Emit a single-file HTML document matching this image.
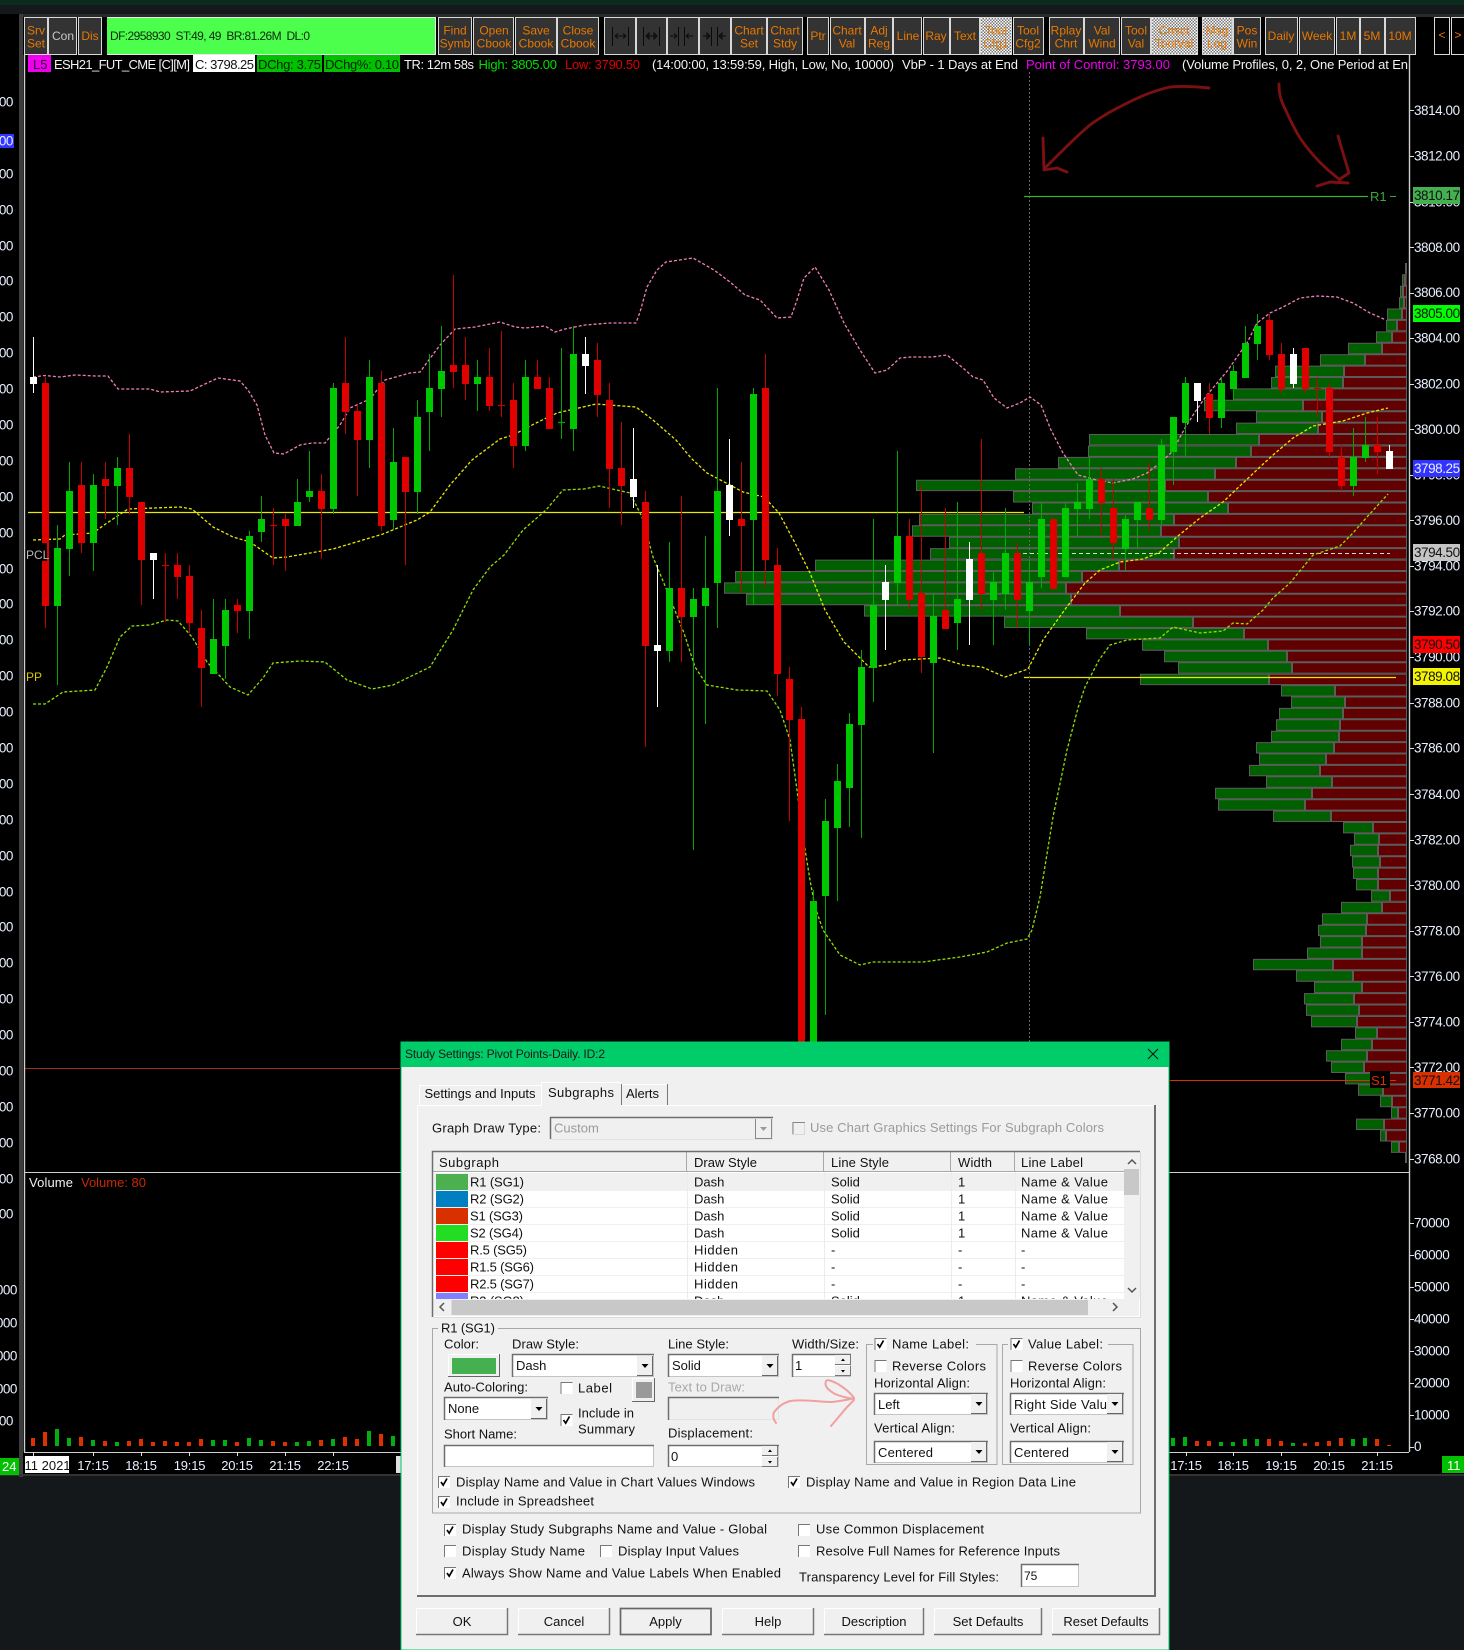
<!DOCTYPE html>
<html><head><meta charset="utf-8"><title>Study Settings</title>
<style>
html,body{margin:0;padding:0;background:#15181a}
svg{display:block}
text{font-family:"Liberation Sans",sans-serif;white-space:pre}
.t{font-size:13px;fill:#111}
.g{font-size:13px;fill:#9a9a9a}
.b{font-size:12px;fill:#e87800;text-anchor:middle}
.w{font-size:13px;fill:#f2f2f2}
.x{font-size:13.5px;letter-spacing:-.45px;fill:#e8f0ff}
.k{font-size:13.5px;letter-spacing:-.45px;fill:#111}
.l{font-size:13.5px;letter-spacing:-.45px;fill:#e8f0ff;text-anchor:end}
.m{font-size:13px;fill:#e8f0ff;text-anchor:middle;letter-spacing:-.2px}
.c{font-size:13px;fill:#111;text-anchor:middle}
.e{fill:#fff;stroke:#c4c4c4}
.d{fill:none;stroke:#6e6e6e;stroke-width:1.5}
</style></head>
<body>
<svg xmlns="http://www.w3.org/2000/svg" width="1464" height="1650" viewBox="0 0 1464 1650">
<defs>
<pattern id="ck" width="3" height="3" patternUnits="userSpaceOnUse"><rect width="3" height="3" fill="#777"/><rect width="1.5" height="1.5" fill="#fff"/><rect x="1.5" y="1.5" width="1.5" height="1.5" fill="#fff"/></pattern>
<g id="c0"><rect width="12" height="12" fill="#fff"/><path d="M.5 12V.5H12" stroke="#777" fill="none"/></g>
<g id="c1"><rect width="12" height="12" fill="#fff"/><path d="M.5 12V.5H12" stroke="#777" fill="none"/><path d="M3 6l2.200 3.200L9 2.500" stroke="#000" stroke-width="1.700" fill="none"/></g>
<g id="a"><rect width="16" height="20" fill="#f0f0f0"/><path d="M15.500 0V20M0 19.500H16" stroke="#666"/><path d="M4.500 8h7L8 12z" fill="#000"/></g>
<g id="s"><rect width="16" height="10" fill="#f0f0f0"/><path d="M15.500 0V10M0 9.500H16" stroke="#777"/><path d="M6 6h4L8 3.500z" fill="#000"/><rect y="11" width="16" height="10" fill="#f0f0f0"/><path d="M15.500 11V21M0 20.500H16" stroke="#777"/><path d="M6 15h4l-2 2.500z" fill="#000"/></g>
</defs>

<rect width="1464" height="1650" fill="#15181a"/>
<rect width="1464" height="5" fill="#0b2c1d"/>
<rect y="5" width="1464" height="9" fill="#14191c"/>
<rect y="14" width="1464" height="3" fill="#2a2a2a"/>
<rect y="14" width="1464" height="1460" fill="#000"/>
<rect y="14" x="22" width="1442" height="3" fill="#2a2a2a"/>
<rect x="19" y="14" width="4" height="1463" fill="#3c3c3c"/>
<rect x="0" y="1474" width="1464" height="2" fill="#333"/>

<!-- Toolbar -->
<g fill="#333" stroke="#d8d8d8" stroke-width="1">
<rect x="24.500" y="17.500" width="23" height="37"/><rect x="48.500" y="17.500" width="28" height="37"/><rect x="78.500" y="17.500" width="23" height="37"/>
<rect x="438.500" y="17.500" width="33" height="37"/><rect x="473.500" y="17.500" width="40" height="37"/><rect x="515.500" y="17.500" width="41" height="37"/><rect x="557.500" y="17.500" width="41" height="37"/>
<rect x="604.500" y="17.500" width="31" height="37"/><rect x="636.500" y="17.500" width="30" height="37"/><rect x="667.500" y="17.500" width="31" height="37"/><rect x="699.500" y="17.500" width="31" height="37"/>
<rect x="731.500" y="17.500" width="35" height="37"/><rect x="767.500" y="17.500" width="35" height="37"/>
<rect x="807.500" y="17.500" width="21" height="37"/><rect x="830.500" y="17.500" width="34" height="37"/><rect x="865.500" y="17.500" width="27" height="37"/><rect x="893.500" y="17.500" width="28" height="37"/><rect x="923.500" y="17.500" width="26" height="37"/><rect x="950.500" y="17.500" width="29" height="37"/>
<rect x="980.500" y="17.500" width="31" height="37" fill="url(#ck)"/><rect x="1013.500" y="17.500" width="30" height="37"/>
<rect x="1049.500" y="17.500" width="34" height="37"/><rect x="1084.500" y="17.500" width="35" height="37"/><rect x="1121.500" y="17.500" width="29" height="37"/>
<rect x="1151.500" y="17.500" width="46" height="37" fill="url(#ck)"/><rect x="1202.500" y="17.500" width="30" height="37" fill="url(#ck)"/><rect x="1233.500" y="17.500" width="27" height="37"/>
<rect x="1265.500" y="17.500" width="32" height="37"/><rect x="1299.500" y="17.500" width="35" height="37"/><rect x="1336.500" y="17.500" width="23" height="37"/><rect x="1360.500" y="17.500" width="24" height="37"/><rect x="1385.500" y="17.500" width="30" height="37"/>
<rect x="1434.500" y="17.500" width="15" height="37" fill="#000"/><rect x="1451.500" y="17.500" width="14" height="37" fill="#000"/>
</g>
<rect x="107" y="17" width="329" height="38" fill="#4dff4d"/>
<path d="M107 54.500H436M435.500 17V55M107 17.500H436" stroke="#e8e8e8" fill="none"/>
<text x="110" y="40" font-size="12" fill="#0a2a0a" textLength="200">DF:2958930  ST:49, 49  BR:81.26M  DL:0</text>

<text class="b" x="36" y="34.500">Srv</text><text class="b" x="36" y="47.500">Set</text>
<text class="b" x="63" y="40" style="fill:#c8c8c8">Con</text>
<text class="b" x="90" y="40">Dis</text>
<text class="b" x="455" y="34.500">Find</text><text class="b" x="455" y="47.500">Symb</text>
<text class="b" x="494" y="34.500">Open</text><text class="b" x="494" y="47.500">Cbook</text>
<text class="b" x="536" y="34.500">Save</text><text class="b" x="536" y="47.500">Cbook</text>
<text class="b" x="578" y="34.500">Close</text><text class="b" x="578" y="47.500">Cbook</text>
<g stroke="#0a0a0a" fill="none">
<path d="M612.500 27V46M628.500 27V46M615 36h11M615 36l3-2.500M615 36l3 2.500M626 36l-3-2.500M626 36l-3 2.500"/>
<path d="M643.500 27V46M659.500 27V46M646 36h11M646 36l3-3v6zM657 36l-3-3v6z"/>
<path d="M678.500 27V46M684.500 27V46M670 36h7M677 36l-3-2.500M677 36l-3 2.500M693 36h-7M686 36l3-2.500M686 36l3 2.500"/>
<path d="M711.500 27V46M717.500 27V46M703 36h7M710 36l-3-3v6zM726 36h-7M719 36l3-3v6z"/>
</g>
<text class="b" x="749" y="34.500">Chart</text><text class="b" x="749" y="47.500">Set</text>
<text class="b" x="785" y="34.500">Chart</text><text class="b" x="785" y="47.500">Stdy</text>
<text class="b" x="818" y="40">Ptr</text>
<text class="b" x="847" y="34.500">Chart</text><text class="b" x="847" y="47.500">Val</text>
<text class="b" x="879" y="34.500">Adj</text><text class="b" x="879" y="47.500">Reg</text>
<text class="b" x="908" y="40">Line</text>
<text class="b" x="936" y="40">Ray</text>
<text class="b" x="965" y="40">Text</text>
<text class="b" x="996" y="34.500">Tool</text><text class="b" x="996" y="47.500">Cfg1</text>
<text class="b" x="1028" y="34.500">Tool</text><text class="b" x="1028" y="47.500">Cfg2</text>
<text class="b" x="1066" y="34.500">Rplay</text><text class="b" x="1066" y="47.500">Chrt</text>
<text class="b" x="1102" y="34.500">Val</text><text class="b" x="1102" y="47.500">Wind</text>
<text class="b" x="1136" y="34.500">Tool</text><text class="b" x="1136" y="47.500">Val</text>
<text class="b" x="1174" y="34.500">Cnsct</text><text class="b" x="1174" y="47.500">ToolVal</text>
<text class="b" x="1217" y="34.500">Msg</text><text class="b" x="1217" y="47.500">Log</text>
<text class="b" x="1247" y="34.500">Pos</text><text class="b" x="1247" y="47.500">Win</text>
<text class="b" x="1281" y="40">Daily</text>
<text class="b" x="1317" y="40">Week</text>
<text class="b" x="1348" y="40">1M</text>
<text class="b" x="1372" y="40">5M</text>
<text class="b" x="1400" y="40">10M</text>
<text class="b" x="1442" y="39">&lt;</text>
<text class="b" x="1458" y="39">&gt;</text>

<!-- Info line -->
<rect x="28" y="55" width="23" height="17" fill="#ee00ee"/>
<text class="t" x="33" y="69" style="fill:#300030">L5</text>
<text class="w" x="54" y="69" textLength="136">ESH21_FUT_CME [C][M]</text>
<rect x="193" y="55" width="62" height="17" fill="#fff"/>
<text class="t" x="195" y="69" textLength="59">C: 3798.25</text>
<rect x="257" y="55" width="65" height="17" fill="#00c000"/>
<text class="t" x="258" y="69" textLength="63" style="fill:#002000">DChg: 3.75</text>
<rect x="324" y="55" width="76" height="17" fill="#00c000"/>
<text class="t" x="325" y="69" textLength="74" style="fill:#002000">DChg%: 0.10</text>
<text class="w" x="404" y="69" textLength="70">TR: 12m 58s</text>
<text class="w" x="478.500" y="69" textLength="78.500" style="fill:#00e000">High: 3805.00</text>
<text class="w" x="565" y="69" textLength="75" style="fill:#e00000">Low: 3790.50</text>
<text class="w" x="652" y="69" textLength="242">(14:00:00, 13:59:59, High, Low, No, 10000)</text>
<text class="w" x="902" y="69" textLength="116">VbP - 1 Days at End</text>
<text class="w" x="1026" y="69" textLength="144" style="fill:#f000f0">Point of Control: 3793.00</text>
<text class="w" x="1182" y="69" textLength="226">(Volume Profiles, 0, 2, One Period at En</text>

<!-- Volume profile -->
<path fill="none" stroke="#5c5c5c" stroke-width="11.400" d="M1402 280H1407M1400 291.400H1407M1399 302.800H1407M1387 314.200H1407M1386 325.600H1407M1376 337.100H1407M1348 348.500H1407M1320 359.900H1407M1275 371.300H1407M1271 382.700H1407M1233 394.100H1407M1204 405.500H1407M1256 416.900H1407M1236 428.300H1407M1089 439.700H1407M1088 451.200H1407M1058 462.600H1407M1015 474H1407M916 485.400H1407M1013 496.800H1407M1032 508.200H1407M919 519.600H1407M912 531H1407M949 542.400H1407M930 553.800H1407M815 565.300H1407M735 576.700H1407M724 588.100H1407M746 599.500H1407M864 610.900H1407M1004 622.300H1407M1086 633.700H1407M1142 645.100H1407M1164 656.500H1407M1178 667.900H1407M1140 679.400H1407M1281 690.800H1407M1291 702.200H1407M1279 713.600H1407M1276 725H1407M1271 736.400H1407M1256 747.800H1407M1259 759.200H1407M1249 770.600H1407M1266 782H1407M1215 793.500H1407M1218 804.900H1407M1273 816.300H1407M1343 827.700H1407M1354 839.100H1407M1350 850.500H1407M1352 861.900H1407M1353 873.300H1407M1356 884.700H1407M1371 896.100H1407M1341 907.600H1407M1322 919H1407M1318 930.400H1407M1320 941.800H1407M1307 953.200H1407M1253 964.600H1407M1296 976H1407M1314 987.400H1407M1304 998.800H1407M1306 1010.200H1407M1311 1021.700H1407M1355 1033.100H1407M1341 1044.500H1407M1326 1055.900H1407M1331 1067.300H1407M1345 1078.700H1407M1358 1090.100H1407M1380 1101.500H1407M1391 1112.900H1407M1356 1124.300H1407M1380 1135.800H1407M1391 1147.200H1407"/>
<path fill="none" stroke="#006000" stroke-width="9.400" d="M1403 280H1404M1401 291.400H1402M1400 302.800H1403M1388 314.200H1401M1387 325.600H1396M1377 337.100H1391M1349 348.500H1381M1321 359.900H1364M1276 371.300H1343M1272 382.700H1342M1234 394.100H1325M1205 405.500H1302M1257 416.900H1321M1237 428.300H1317M1090 439.700H1258M1089 451.200H1250M1059 462.600H1235M1016 474H1214M917 485.400H1164M1014 496.800H1207M1033 508.200H1227M920 519.600H1173M913 531H1160M950 542.400H1178M931 553.800H1173M816 565.300H1118M736 576.700H1081M725 588.100H1065M747 599.500H1070M865 610.900H1119M1005 622.300H1192M1087 633.700H1243M1143 645.100H1267M1165 656.500H1286M1179 667.900H1291M1141 679.400H1268M1282 690.800H1334M1292 702.200H1344M1280 713.600H1342M1277 725H1339M1272 736.400H1338M1257 747.800H1333M1260 759.200H1325M1250 770.600H1319M1267 782H1331M1216 793.500H1311M1219 804.900H1304M1274 816.300H1330M1344 827.700H1372M1355 839.100H1378M1351 850.500H1377M1353 861.900H1379M1354 873.300H1377M1357 884.700H1377M1372 896.100H1389M1342 907.600H1381M1323 919H1366M1319 930.400H1365M1321 941.800H1361M1308 953.200H1361M1254 964.600H1332M1297 976H1352M1315 987.400H1361M1305 998.800H1353M1307 1010.200H1358M1312 1021.700H1356M1356 1033.100H1376M1342 1044.500H1371M1327 1055.900H1366M1332 1067.300H1363M1346 1078.700H1374M1359 1090.100H1382M1381 1101.500H1391M1392 1112.900H1397M1357 1124.300H1383M1381 1135.800H1385M1392 1147.200H1398"/>
<path fill="none" stroke="#600000" stroke-width="9.400" d="M1406 280H1406.500M1404 291.400H1406M1405 302.800H1406M1403 314.200H1406M1398 325.600H1406M1393 337.100H1406M1383 348.500H1406M1366 359.900H1406M1345 371.300H1406M1344 382.700H1406M1327 394.100H1406M1304 405.500H1406M1323 416.900H1406M1319 428.300H1406M1260 439.700H1406M1252 451.200H1406M1237 462.600H1406M1216 474H1406M1166 485.400H1406M1209 496.800H1406M1229 508.200H1406M1175 519.600H1406M1162 531H1406M1180 542.400H1406M1175 553.800H1406M1120 565.300H1406M1083 576.700H1406M1067 588.100H1406M1072 599.500H1406M1121 610.900H1406M1194 622.300H1406M1245 633.700H1406M1269 645.100H1406M1288 656.500H1406M1293 667.900H1406M1270 679.400H1406M1336 690.800H1406M1346 702.200H1406M1344 713.600H1406M1341 725H1406M1340 736.400H1406M1335 747.800H1406M1327 759.200H1406M1321 770.600H1406M1333 782H1406M1313 793.500H1406M1306 804.900H1406M1332 816.300H1406M1374 827.700H1406M1380 839.100H1406M1379 850.500H1406M1381 861.900H1406M1379 873.300H1406M1379 884.700H1406M1391 896.100H1406M1383 907.600H1406M1368 919H1406M1367 930.400H1406M1363 941.800H1406M1363 953.200H1406M1334 964.600H1406M1354 976H1406M1363 987.400H1406M1355 998.800H1406M1360 1010.200H1406M1358 1021.700H1406M1378 1033.100H1406M1373 1044.500H1406M1368 1055.900H1406M1365 1067.300H1406M1376 1078.700H1406M1384 1090.100H1406M1393 1101.500H1406M1399 1112.900H1406M1385 1124.300H1406M1387 1135.800H1406M1400 1147.200H1406"/>
<rect x="1405" y="263" width="2" height="11" fill="#5c5c5c"/>
<rect x="1405" y="1152" width="2" height="11" fill="#5c5c5c"/>

<!-- Horizontal / vertical reference lines -->
<path d="M28 512.500H1024" stroke="#e8e800" stroke-width="1.300"/>
<path d="M1024 677.500H1396" stroke="#e8e800" stroke-width="1.300"/>
<path d="M1023 553.500H1390" stroke="#d8d8d8" stroke-dasharray="4 3"/>
<path d="M1029.500 72V1042" stroke="#6a6a6a" stroke-dasharray="2 2"/>
<path d="M24 1068.500H400" stroke="#a03018"/>
<path d="M1024 196.500H1368" stroke="#35b035" stroke-width="1.200"/>
<path d="M1170 1080.500H1396" stroke="#d83000"/>

<!-- Bands -->
<g fill="none" stroke-dasharray="3 2" stroke-width="1.300">
<path stroke="#f080b8" d="M33 377L45 375.500 60 377 75 375 95 376 108 376 118 389 150 389 160 392 190 391 205 384 218 378 240 381 248 390 257 405 265 435 274 453 284 454 300 445 312 443 325 443 340 425 350 408 370 399 385 380 410 373 420 372 440 345 455 329 475 327 500 322 515 327 525 328 545 326 555 332 565 329 585 325 610 323 636 323 640 312 647 287 657 270 666 262 693 258 714 270 730 282 745 295 760 300 777 318 791 317 797 300 804 278 815 267 829 290 844 323 860 350 875 373 887 370 900 358 911 357 932 357 947 355 963 368 973 377 983 380 994 398 1007 408 1020 403 1030 397 1041 405 1051 430 1063 453 1078 475 1097 480 1113 483 1133 479 1147 473 1160 463 1172 452 1185 428 1195 412 1207 395 1218 382 1228 370 1237 357 1247 343 1257 323 1270 313 1283 307 1300 298 1317 296 1337 297 1353 303 1370 313 1386 320"/>
<path stroke="#e8e800" d="M33 540L60 539 65 535 93 533 107 523 128 509 180 507 192 509 213 527 233 537 250 542 273 558 287 557 333 549 383 534 417 520 430 512 450 485 472 460 500 439 513 435 538 422 557 413 596 404 636 407 653 420 676 440 691 458 707 473 730 485 743 492 764 497 779 513 795 543 810 573 825 610 844 642 869 667 887 665 902 660 940 658 963 665 982 667 1005 677 1028 669 1043 640 1066 608 1085 583 1100 570 1120 562 1143 559 1160 552 1178 536 1200 518 1223 502 1243 483 1260 467 1273 455 1293 438 1313 426 1343 421 1367 413 1388 408"/>
<path stroke="#90e000" d="M33 704L45 704 63 692 95 690 107 667 120 637 132 626 150 625 167 620 178 621 192 637 207 662 230 687 248 695 263 678 273 663 300 661 325 662 347 680 372 689 393 685 430 667 453 630 473 590 490 567 504 555 523 530 546 510 563 490 584 489 599 486 630 493 642 517 653 557 668 593 684 633 695 667 707 685 737 690 767 691 780 710 790 740 797 790 803 837 810 880 815 907 823 930 840 955 860 965 873 962 923 962 960 957 987 952 1007 943 1027 939 1032 930 1040 897 1053 817 1067 750 1078 708 1085 687 1099 660 1110 645 1127 640 1160 638 1173 627 1200 633 1223 631 1233 623 1247 624 1263 610 1273 598 1290 583 1313 555 1340 546 1353 533 1367 517 1388 494"/>
</g>

<!-- Candle wicks -->
<path fill="none" stroke="#c80000" d="M45.500 377V628M81.500 462V553M105.500 462V519M129.500 434V514M141.500 502V605M165.500 553V622M177.500 553V599M189.500 565V633M201.500 610V707M237.500 599V633M273.500 508V565M285.500 514V571M321.500 474V559M345.500 337V434M357.500 405V496M381.500 371V531M405.500 457V565M453.500 275V388M465.500 337V400M489.500 348V411M501.500 331V417M513.500 383V468M537.500 360V389M549.500 377V429M597.500 343V417M609.500 383V508M621.500 422V525M645.500 491V747M681.500 496V662M741.500 462V593M765.500 354V588M777.500 548V696M789.500 667V821M801.500 707V1042M909.500 519V610M921.500 485V673M945.500 508V629M981.500 439V610M1017.500 542V628M1053.500 519V589M1101.500 468V536M1113.500 479V559M1149.500 462V531M1209.500 383V434M1269.500 314V360M1281.500 343V394M1305.500 348V394M1317.500 377V417M1329.500 383V457M1341.500 445V491M1377.500 417V474"/>
<path fill="none" stroke="#00a800" d="M57.500 525V685M69.500 462V576M93.500 474V571M117.500 457V525M213.500 599V674M225.500 599V679M249.500 531V639M261.500 496V542M297.500 479V526M309.500 451V502M333.500 383V514M369.500 360V468M393.500 428V530M417.500 400V514M429.500 354V451M441.500 326V417M477.500 360V411M525.500 360V451M561.500 348V439M573.500 326V451M669.500 542V662M693.500 588V850M705.500 536V724M717.500 388V628M753.500 388V605M813.500 890V1042M825.500 799V1015M837.500 764V901M849.500 713V827M861.500 650V838M873.500 519V702M897.500 451V605M933.500 593V753M957.500 502V650M993.500 571V645M1005.500 508V610M1029.500 559V645M1041.500 502V588M1065.500 502V577M1077.500 483V536M1089.500 457V519M1125.500 515V571M1137.500 502V548M1161.500 439V525M1173.500 417V485M1185.500 377V457M1221.500 377V428M1233.500 365V400M1245.500 326V378M1257.500 314V360M1353.500 428V496M1365.500 417V462"/>
<path fill="none" stroke="#fff" d="M33.500 337V393M153.500 553V599M585.500 337V394M633.500 428V508M657.500 565V707M729.500 439V536M885.500 565V650M969.500 542V645M1197.500 383V422M1293.500 348V388M1389.500 445V469"/>
<!-- Candle bodies -->
<path fill="none" stroke="#e00000" stroke-width="7" d="M45.500 383V606M81.500 485V543M105.500 479V486M129.500 468V497M141.500 502V560M177.500 565V577M189.500 576V623M201.500 628V668M237.500 605V611M285.500 519V526M321.500 491V509M345.500 383V412M357.500 411V440M381.500 383V526M405.500 457V492M453.500 365V372M465.500 365V384M489.500 377V406M513.500 400V446M537.500 377V389M549.500 388V429M597.500 360V395M609.500 400V469M621.500 468V486M645.500 502V646M681.500 588V617M741.500 519V526M765.500 388V560M777.500 565V674M789.500 679V720M801.500 719V1042M909.500 536V600M921.500 593V657M945.500 610V629M981.500 553V594M1017.500 553V600M1053.500 519V589M1101.500 479V503M1113.500 508V543M1149.500 508V520M1209.500 394V418M1269.500 320V355M1281.500 354V389M1305.500 348V389M1329.500 388V452M1341.500 457V486M1377.500 445V452"/>
<path fill="none" stroke="#00c800" stroke-width="7" d="M57.500 548V606M69.500 491V549M93.500 485V543M117.500 468V486M213.500 639V674M225.500 610V646M249.500 536V611M261.500 519V532M297.500 502V526M309.500 491V497M333.500 388V509M369.500 377V440M393.500 462V520M417.500 417V492M429.500 388V412M441.500 371V389M477.500 377V384M525.500 377V446M573.500 354V429M669.500 588V651M693.500 599V617M705.500 588V606M717.500 491V583M753.500 394V520M813.500 901V1042M825.500 821V896M837.500 781V828M849.500 724V788M861.500 667V725M873.500 605V668M897.500 536V583M933.500 616V663M957.500 599V623M993.500 582V600M1005.500 553V594M1029.500 582V611M1041.500 519V577M1065.500 508V577M1077.500 502V509M1089.500 479V509M1125.500 519V549M1137.500 502V520M1161.500 445V520M1173.500 417V452M1185.500 383V423M1221.500 383V418M1233.500 371V389M1245.500 343V378M1257.500 326V344M1353.500 457V486M1365.500 445V458"/>
<path fill="none" stroke="#fff" stroke-width="7" d="M33.500 377V384M153.500 553V560M585.500 354V366M633.500 479V497M657.500 645V651M729.500 485V520M885.500 582V600M969.500 559V600M1197.500 383V401M1293.500 354V384M1389.500 451V469"/>
<!-- Dojis -->
<path fill="none" stroke="#c80000" stroke-width="1.300" d="M162 565.500h7M270 525.500h7M498 405.500h7M1314 388.500h7"/>
<path fill="none" stroke="#00a800" stroke-width="1.300" d="M558 422.500h7"/>

<!-- Labels on chart -->
<rect x="26" y="543" width="21" height="18" fill="#000"/>
<text x="26" y="559" font-size="12" fill="#b8b8b8">PCL</text>
<text x="26" y="681" font-size="12" fill="#d8c800">PP</text>
<text x="1370" y="201" font-size="13" fill="#3fa53f">R1</text>
<path d="M1390 196.500h6" stroke="#3fa53f"/>
<rect x="1370" y="1071" width="20" height="17" fill="#000"/>
<text x="1371" y="1085" font-size="13" fill="#d83000">S1</text>

<!-- Hand drawn arrows -->
<g fill="none" stroke="#7a1010" stroke-width="2.900" stroke-linecap="round" stroke-linejoin="round">
<path d="M1209 88C1190 86 1180 86 1170 87 1147 92 1127 103 1110 112 1100 118 1095 121 1090 125 1078 135 1065 148 1058 155L1044 169"/>
<path d="M1043 138L1044 170 1057 168 1067 172"/>
<path d="M1279 84C1279 92 1280 97 1282 102 1287 113 1292 125 1300 138 1308 150 1317 160 1328 170L1340 180"/>
<path d="M1338 136L1343 153 1349 173 1340 179M1348 183L1330 182 1317 186"/>
</g>

<!-- Right axis -->
<path d="M24.500 55V1452M1409.500 55V1452" stroke="#cfcfcf" stroke-width="1.400"/>
<path d="M24 1172.500H1409M24 1452.500H1409" stroke="#cfcfcf"/>
<path stroke="#e0e0e0" d="M1410 110.500h4M1410 156.500h4M1410 202.500h4M1410 247.500h4M1410 293.500h4M1410 338.500h4M1410 384.500h4M1410 429.500h4M1410 475.500h4M1410 520.500h4M1410 566.500h4M1410 611.500h4M1410 657.500h4M1410 703.500h4M1410 748.500h4M1410 794.500h4M1410 840.500h4M1410 885.500h4M1410 931.500h4M1410 976.500h4M1410 1022.500h4M1410 1067.500h4M1410 1113.500h4M1410 1159.500h4M1410 1223.500h4M1410 1255.500h4M1410 1287.500h4M1410 1319.500h4M1410 1351.500h4M1410 1383.500h4M1410 1415.500h4M1410 1447.500h4"/>
<text class="x" x="1414" y="115">3814.00</text><text class="x" x="1414" y="160.500">3812.00</text><text class="x" x="1414" y="206.500">3810.00</text><text class="x" x="1414" y="252">3808.00</text><text class="x" x="1414" y="297">3806.00</text><text class="x" x="1414" y="342.500">3804.00</text><text class="x" x="1414" y="388.500">3802.00</text><text class="x" x="1414" y="434">3800.00</text><text class="x" x="1414" y="479.500">3798.00</text><text class="x" x="1414" y="525">3796.00</text><text class="x" x="1414" y="570.500">3794.00</text><text class="x" x="1414" y="615.500">3792.00</text><text class="x" x="1414" y="661.500">3790.00</text><text class="x" x="1414" y="707.500">3788.00</text><text class="x" x="1414" y="752.500">3786.00</text><text class="x" x="1414" y="799">3784.00</text><text class="x" x="1414" y="844.500">3782.00</text><text class="x" x="1414" y="890">3780.00</text><text class="x" x="1414" y="935.500">3778.00</text><text class="x" x="1414" y="981">3776.00</text><text class="x" x="1414" y="1026.500">3774.00</text><text class="x" x="1414" y="1072">3772.00</text><text class="x" x="1414" y="1117.500">3770.00</text><text class="x" x="1414" y="1163.500">3768.00</text>
<rect x="1413" y="187" width="47" height="17" fill="#45b050"/><text class="k" x="1414" y="200">3810.17</text>
<rect x="1413" y="305" width="47" height="17" fill="#00ff00"/><text class="k" x="1414" y="318">3805.00</text>
<rect x="1413" y="460" width="47" height="17" fill="#3333ff"/><text class="x" x="1414" y="473">3798.25</text>
<rect x="1413" y="544" width="47" height="17" fill="#c4c4c4"/><text class="k" x="1414" y="557">3794.50</text>
<rect x="1413" y="636" width="47" height="17" fill="#ff0000"/><text class="k" x="1414" y="649">3790.50</text>
<rect x="1413" y="668" width="47" height="17" fill="#f4f400"/><text class="k" x="1414" y="681">3789.08</text>
<rect x="1413" y="1072" width="47" height="16" fill="#d83000"/><text class="k" x="1414" y="1085">3771.42</text>

<text class="x" x="1414" y="1227.500">70000</text><text class="x" x="1414" y="1259.500">60000</text><text class="x" x="1414" y="1291.500">50000</text><text class="x" x="1414" y="1323.500">40000</text><text class="x" x="1414" y="1355.500">30000</text><text class="x" x="1414" y="1387.500">20000</text><text class="x" x="1414" y="1419.500">10000</text><text class="x" x="1414" y="1451">0</text>

<!-- Left axis -->
<g>
<rect x="0" y="134" width="14" height="14" fill="#3333ff"/>
<text class="l" x="13" y="106.500">00</text><text class="l" x="13" y="145.500">00</text><text class="l" x="13" y="178.500">00</text><text class="l" x="13" y="214.500">00</text><text class="l" x="13" y="250.500">00</text><text class="l" x="13" y="285.500">00</text><text class="l" x="13" y="321.500">00</text><text class="l" x="13" y="357.500">00</text><text class="l" x="13" y="393.500">00</text><text class="l" x="13" y="429.500">00</text><text class="l" x="13" y="465.500">00</text><text class="l" x="13" y="501.500">00</text><text class="l" x="13" y="537.500">00</text><text class="l" x="13" y="573.500">00</text><text class="l" x="13" y="608.500">00</text><text class="l" x="13" y="644.500">00</text><text class="l" x="13" y="680.500">00</text><text class="l" x="13" y="716.500">00</text><text class="l" x="13" y="752.500">00</text><text class="l" x="13" y="788.500">00</text><text class="l" x="13" y="824.500">00</text><text class="l" x="13" y="860.500">00</text><text class="l" x="13" y="896.500">00</text><text class="l" x="13" y="931.500">00</text><text class="l" x="13" y="967.500">00</text><text class="l" x="13" y="1003.500">00</text><text class="l" x="13" y="1039.500">00</text><text class="l" x="13" y="1075.500">00</text><text class="l" x="13" y="1111.500">00</text><text class="l" x="13" y="1147.500">00</text><text class="l" x="13" y="1183.500">00</text><text class="l" x="13" y="1218.500">00</text>
<text class="l" x="17" y="1294.500">000</text><text class="l" x="17" y="1327.500">000</text><text class="l" x="17" y="1360.500">000</text><text class="l" x="17" y="1393.500">000</text><text class="l" x="13" y="1425.500">00</text>
</g>

<!-- Volume panel -->
<text class="w" x="29" y="1187" textLength="44">Volume</text>
<text class="w" x="81" y="1187" textLength="65" style="fill:#c82a00">Volume: 80</text>
<path fill="none" stroke="#00b010" stroke-width="4" d="M57 1446v-17M69 1446v-8M93 1446v-6M117 1446v-4M213 1446v-6M225 1446v-6M249 1446v-8M261 1446v-6M297 1446v-4M309 1446v-5M333 1446v-7M369 1446v-15M393 1446v-10M1173 1446v-8M1185 1446v-9M1221 1446v-4M1233 1446v-4M1245 1446v-7M1257 1446v-7M1293 1446v-3M1353 1446v-7M1365 1446v-8"/>
<path fill="none" stroke="#e03000" stroke-width="4" d="M33 1446v-8M45 1446v-14M81 1446v-9M105 1446v-5M129 1446v-5M141 1446v-7M153 1446v-4M165 1446v-5M177 1446v-4M189 1446v-4M201 1446v-7M237 1446v-4M273 1446v-5M285 1446v-4M321 1446v-6M345 1446v-9M357 1446v-7M381 1446v-12M1197 1446v-5M1209 1446v-5M1269 1446v-7M1281 1446v-5M1305 1446v-3M1317 1446v-4M1329 1446v-5M1341 1446v-8M1377 1446v-7M1389 1446v-1"/>

<!-- Time axis -->
<path stroke="#e0e0e0" d="M33.500 1452v4M93.500 1452v4M141.500 1452v4M189.500 1452v4M237.500 1452v4M285.500 1452v4M333.500 1452v4M1186.500 1452v4M1233.500 1452v4M1281.500 1452v4M1329.500 1452v4M1377.500 1452v4"/>
<rect x="25" y="1456" width="44" height="17" fill="#fff"/>
<text class="t" x="24.500" y="1470">11 2021</text>
<text class="m" x="93" y="1470">17:15</text><text class="m" x="141" y="1470">18:15</text><text class="m" x="189.500" y="1470">19:15</text><text class="m" x="237" y="1470">20:15</text><text class="m" x="285" y="1470">21:15</text><text class="m" x="333" y="1470">22:15</text>
<rect x="396" y="1456" width="6" height="17" fill="#e0e0e0"/>
<text class="m" x="1186" y="1470">17:15</text><text class="m" x="1233" y="1470">18:15</text><text class="m" x="1281" y="1470">19:15</text><text class="m" x="1329" y="1470">20:15</text><text class="m" x="1377" y="1470">21:15</text>
<rect x="0" y="1458" width="19" height="17" fill="#00c000"/>
<text x="2" y="1471" font-size="13" fill="#fff">24</text>
<rect x="1442" y="1456" width="22" height="17" fill="#00c000"/>
<text x="1447" y="1470" font-size="13" fill="#fff">11</text>

<!-- Dialog -->
<rect x="401" y="1042" width="768" height="608" fill="#f0f0f0" stroke="#00cc6a" stroke-width="1"/>
<rect x="401" y="1042" width="768" height="25" fill="#00cc6a"/>
<text x="405" y="1058" font-size="12" fill="#1a1a1a" textLength="200">Study Settings: Pivot Points-Daily. ID:2</text>
<path d="M1148 1049l10 10M1158 1049l-10 10" stroke="#111" stroke-width="1.100"/>

<!-- Pane & tabs -->
<path d="M417.500 1596V1105.500H1155" stroke="#fff" fill="none"/>
<path d="M1155 1105V1596H417" stroke="#6e6e6e" stroke-width="2" fill="none"/>
<path d="M419.500 1105V1085.500H541" stroke="#fff" fill="none"/>
<path d="M541.500 1105V1082.500H621" stroke="#fff" fill="none"/>
<path d="M621.500 1105V1084" stroke="#777" fill="none"/>
<path d="M622 1084.500H667" stroke="#fff" fill="none"/>
<path d="M667.500 1084V1105" stroke="#777" fill="none"/>
<rect x="542" y="1102" width="79" height="5" fill="#f0f0f0"/>
<text class="t" x="424.500" y="1098" textLength="111">Settings and Inputs</text>
<text class="t" x="548" y="1097" textLength="66">Subgraphs</text>
<text class="t" x="626" y="1098" textLength="33">Alerts</text>

<text class="t" x="432" y="1132.500" textLength="109">Graph Draw Type:</text>
<rect x="550.500" y="1117.500" width="222" height="22" fill="#f0f0f0" stroke="#e4e4e4"/>
<path d="M550.500 1139V1117.500H773" class="d"/>
<text class="g" x="554" y="1132.500">Custom</text>
<rect x="755" y="1119" width="17" height="20" fill="#f0f0f0"/><path d="M771.500 1119V1138.500H755M755.500 1119V1138" stroke="#888" fill="none"/><path d="M760 1127h7l-3.500 4z" fill="#999"/>
<rect x="792.500" y="1122.500" width="12" height="12" fill="#f0f0f0" stroke="#d8d8d8"/><path d="M793 1134V1122.500H805" stroke="#888" fill="none"/>
<text class="g" x="810" y="1132" textLength="294">Use Chart Graphics Settings For Subgraph Colors</text>

<!-- List -->
<rect x="432" y="1151" width="708" height="166" fill="#fff"/>
<rect x="433" y="1152" width="691" height="19" fill="#f0f0f0"/>
<rect x="1124" y="1152" width="16" height="147" fill="#f0f0f0"/>
<rect x="434" y="1173" width="690" height="18" fill="#f0f0f0"/>
<path stroke="#efefef" d="M434 1207.500H1124M434 1224.500H1124M434 1241.500H1124M434 1258.500H1124M434 1275.500H1124M434 1292.500H1124"/>
<path stroke="#a8a8a8" d="M433 1171.500H1124M686.500 1152V1171M823.500 1152V1171M950.500 1152V1171M1014.500 1152V1171"/>
<path stroke="#ececec" d="M687.500 1172V1299M824.500 1172V1299M951.500 1172V1299M1015.500 1172V1299"/>
<text class="t" x="439" y="1167" textLength="60">Subgraph</text><text class="t" x="694" y="1167" textLength="63">Draw Style</text><text class="t" x="831" y="1167" textLength="58">Line Style</text><text class="t" x="958" y="1167" textLength="34">Width</text><text class="t" x="1021" y="1167" textLength="62">Line Label</text>
<rect x="436" y="1174" width="32" height="16" fill="#4caf50"/><rect x="436" y="1191" width="32" height="16" fill="#0080c0"/><rect x="436" y="1208" width="32" height="16" fill="#d93000"/><rect x="436" y="1225" width="32" height="16" fill="#22dd22"/><rect x="436" y="1242" width="32" height="16" fill="#f00"/><rect x="436" y="1259" width="32" height="16" fill="#f00"/><rect x="436" y="1276" width="32" height="16" fill="#f00"/><rect x="436" y="1293" width="32" height="8" fill="#8080ff"/>
<text class="t" x="470" y="1186.500" textLength="54">R1 (SG1)</text><text class="t" x="694" y="1186.500">Dash</text><text class="t" x="831" y="1186.500">Solid</text><text class="t" x="958" y="1186.500">1</text><text class="t" x="1021" y="1186.500" textLength="87">Name &amp; Value</text>
<text class="t" x="470" y="1203.500" textLength="54">R2 (SG2)</text><text class="t" x="694" y="1203.500">Dash</text><text class="t" x="831" y="1203.500">Solid</text><text class="t" x="958" y="1203.500">1</text><text class="t" x="1021" y="1203.500" textLength="87">Name &amp; Value</text>
<text class="t" x="470" y="1220.500" textLength="53">S1 (SG3)</text><text class="t" x="694" y="1220.500">Dash</text><text class="t" x="831" y="1220.500">Solid</text><text class="t" x="958" y="1220.500">1</text><text class="t" x="1021" y="1220.500" textLength="87">Name &amp; Value</text>
<text class="t" x="470" y="1237.500" textLength="53">S2 (SG4)</text><text class="t" x="694" y="1237.500">Dash</text><text class="t" x="831" y="1237.500">Solid</text><text class="t" x="958" y="1237.500">1</text><text class="t" x="1021" y="1237.500" textLength="87">Name &amp; Value</text>
<text class="t" x="470" y="1254.500" textLength="57">R.5 (SG5)</text><text class="t" x="694" y="1254.500" textLength="44">Hidden</text><text class="t" x="831" y="1254.500">-</text><text class="t" x="958" y="1254.500">-</text><text class="t" x="1021" y="1254.500">-</text>
<text class="t" x="470" y="1271.500" textLength="64">R1.5 (SG6)</text><text class="t" x="694" y="1271.500" textLength="44">Hidden</text><text class="t" x="831" y="1271.500">-</text><text class="t" x="958" y="1271.500">-</text><text class="t" x="1021" y="1271.500">-</text>
<text class="t" x="470" y="1288.500" textLength="64">R2.5 (SG7)</text><text class="t" x="694" y="1288.500" textLength="44">Hidden</text><text class="t" x="831" y="1288.500">-</text><text class="t" x="958" y="1288.500">-</text><text class="t" x="1021" y="1288.500">-</text>
<text class="t" x="470" y="1305.500" textLength="54">R3 (SG8)</text><text class="t" x="694" y="1305.500">Dash</text><text class="t" x="831" y="1305.500">Solid</text><text class="t" x="958" y="1305.500">1</text><text class="t" x="1021" y="1305.500" textLength="87">Name &amp; Value</text>
<rect x="433" y="1299" width="706" height="17" fill="#f0f0f0"/>
<rect x="451.500" y="1300" width="636.500" height="15" fill="#c8c8c8"/>
<rect x="1124" y="1169" width="15" height="26" fill="#c8c8c8"/>
<path d="M1128 1164l4-4 4 4M1128 1288l4 4 4-4M444 1303l-4 4 4 4M1113 1303l4 4-4 4" fill="none" stroke="#555" stroke-width="1.500"/>
<path d="M432.500 1317V1151.500H1140" stroke="#6e6e6e" stroke-width="1.500" fill="none"/>
<path d="M1140.500 1152V1317.500H433" stroke="#dcdcdc" fill="none"/>

<!-- R1 group -->
<rect x="432.500" y="1328.500" width="708" height="184.500" fill="none" stroke="#a8a8a8"/>
<rect x="438" y="1320" width="60" height="16" fill="#f0f0f0"/>
<text class="t" x="441" y="1332.500" textLength="54">R1 (SG1)</text>
<text class="t" x="444" y="1348.500" textLength="35">Color:</text>
<text class="t" x="512" y="1348.500" textLength="67">Draw Style:</text>
<text class="t" x="668" y="1348.500" textLength="61">Line Style:</text>
<text class="t" x="792" y="1348.500" textLength="67">Width/Size:</text>
<rect x="448" y="1354" width="52" height="23" fill="#f0f0f0"/><path d="M448.500 1377V1354.500H500" stroke="#fff" fill="none"/><path d="M499.500 1354V1376.500H448" stroke="#666" fill="none"/>
<rect x="452" y="1358" width="44" height="16" fill="#45b050"/>

<rect class="e" x="512.500" y="1354.500" width="141" height="22"/><path class="d" d="M512.500 1377V1354.500H654"/><use href="#a" x="637" y="1356"/>
<text class="t" x="516" y="1370">Dash</text>
<rect class="e" x="668.500" y="1354.500" width="110" height="22"/><path class="d" d="M668.500 1377V1354.500H779"/><use href="#a" x="762" y="1356"/>
<text class="t" x="672" y="1370">Solid</text>
<rect class="e" x="792.500" y="1354.500" width="58" height="22"/><path class="d" d="M792.500 1377V1354.500H851"/><use href="#s" x="835" y="1355"/>
<text class="t" x="795" y="1370">1</text>

<text class="t" x="444" y="1391.500" textLength="84">Auto-Coloring:</text>
<rect class="e" x="444.500" y="1397.500" width="103" height="22"/><path class="d" d="M444.500 1420V1397.500H548"/><use href="#a" x="531" y="1399"/>
<text class="t" x="448" y="1413">None</text>
<use href="#c0" x="560.500" y="1382"/><text class="t" x="578" y="1392.500" textLength="34">Label</text>
<rect x="632" y="1378" width="23" height="24" fill="#f0f0f0"/><path d="M632.500 1402V1378.500H655" stroke="#fff" fill="none"/><path d="M654.500 1378V1401.500H632" stroke="#666" fill="none"/>
<rect x="636" y="1382" width="16" height="16" fill="#9a9a9a"/>
<use href="#c1" x="560.500" y="1414"/>
<text class="t" x="578" y="1417.500" textLength="56">Include in</text>
<text class="t" x="578" y="1433.500" textLength="57">Summary</text>
<text class="g" x="668" y="1391.500" textLength="77" style="fill:#a8a8a8">Text to Draw:</text>
<rect x="668.500" y="1397.500" width="110" height="22" fill="#f0f0f0" stroke="#e4e4e4"/><path class="d" d="M668.500 1420V1397.500H779"/>
<text class="t" x="444" y="1438.500" textLength="73">Short Name:</text>
<rect class="e" x="444.500" y="1445.500" width="209" height="21"/><path class="d" d="M444.500 1467V1445.500H654"/>
<text class="t" x="668" y="1437.500" textLength="85">Displacement:</text>
<rect class="e" x="668.500" y="1445.500" width="110" height="21"/><path class="d" d="M668.500 1467V1445.500H779"/><use href="#s" x="762" y="1446"/>
<text class="t" x="671" y="1461">0</text>

<!-- Name Label -->
<path d="M873 1344.500H866.500V1464.500H997V1344.500H976" stroke="#a8a8a8" fill="#f0f0f0"/>
<rect x="874" y="1336" width="100" height="12" fill="#f0f0f0"/>
<use href="#c1" x="874.500" y="1338"/><text class="t" x="892" y="1348.500" textLength="77">Name Label:</text>
<use href="#c0" x="874.500" y="1360"/><text class="t" x="892" y="1370.500" textLength="94">Reverse Colors</text>
<text class="t" x="874" y="1387.500" textLength="96">Horizontal Align:</text>
<rect class="e" x="874.500" y="1393.500" width="113" height="21"/><path class="d" d="M874.500 1415V1393.500H988"/><use href="#a" x="971" y="1394"/>
<text class="t" x="878" y="1409">Left</text>
<text class="t" x="874" y="1432.500" textLength="81">Vertical Align:</text>
<rect class="e" x="874.500" y="1441.500" width="113" height="21"/><path class="d" d="M874.500 1463V1441.500H988"/><use href="#a" x="971" y="1442"/>
<text class="t" x="878" y="1457" textLength="55">Centered</text>

<!-- Value Label -->
<path d="M1008 1344.500H1002.500V1464.500H1133V1344.500H1108" stroke="#a8a8a8" fill="#f0f0f0"/>
<rect x="1009" y="1336" width="98" height="12" fill="#f0f0f0"/>
<use href="#c1" x="1010.500" y="1338"/><text class="t" x="1028" y="1348.500" textLength="75">Value Label:</text>
<use href="#c0" x="1010.500" y="1360"/><text class="t" x="1028" y="1370.500" textLength="94">Reverse Colors</text>
<text class="t" x="1010" y="1387.500" textLength="96">Horizontal Align:</text>
<rect class="e" x="1010.500" y="1393.500" width="113" height="21"/><path class="d" d="M1010.500 1415V1393.500H1124"/>
<text class="t" x="1014" y="1409" textLength="93">Right Side Valu</text><use href="#a" x="1107" y="1394"/>
<text class="t" x="1010" y="1432.500" textLength="81">Vertical Align:</text>
<rect class="e" x="1010.500" y="1441.500" width="113" height="21"/><path class="d" d="M1010.500 1463V1441.500H1124"/><use href="#a" x="1107" y="1442"/>
<text class="t" x="1014" y="1457" textLength="55">Centered</text>

<!-- pink arrow -->
<g fill="none" stroke="#f0a0a0" stroke-width="2" stroke-linecap="round" stroke-linejoin="round">
<path d="M776 1423C772 1418 773 1413 775 1411 780 1405 784 1403 790 1401 805 1399 820 1402 832 1402 840 1401 848 1400 854 1398"/>
<path d="M854 1398C850 1392 844 1388 838 1384 832 1381 827 1379 826 1381 824 1386 828 1390 835 1394 842 1397 848 1398 854 1399"/>
<path d="M854 1400C848 1406 845 1409 842 1413L831 1426"/>
</g>

<!-- Checkbox rows -->
<use href="#c1" x="438" y="1476"/><text class="t" x="456" y="1486.500" textLength="299">Display Name and Value in Chart Values Windows</text>
<use href="#c1" x="788" y="1476"/><text class="t" x="806" y="1486.500" textLength="270">Display Name and Value in Region Data Line</text>
<use href="#c1" x="438" y="1496"/><text class="t" x="456" y="1505.500" textLength="138">Include in Spreadsheet</text>
<use href="#c1" x="444" y="1524"/><text class="t" x="462" y="1533.500" textLength="305">Display Study Subgraphs Name and Value - Global</text>
<use href="#c0" x="798" y="1524"/><text class="t" x="816" y="1533.500" textLength="168">Use Common Displacement</text>
<use href="#c0" x="444" y="1545"/><text class="t" x="462" y="1555.500" textLength="123">Display Study Name</text>
<use href="#c0" x="600" y="1545"/><text class="t" x="618" y="1555.500" textLength="121">Display Input Values</text>
<use href="#c0" x="798" y="1545"/><text class="t" x="816" y="1555.500" textLength="244">Resolve Full Names for Reference Inputs</text>
<use href="#c1" x="444" y="1567"/><text class="t" x="462" y="1577.500" textLength="319">Always Show Name and Value Labels When Enabled</text>
<text class="t" x="799" y="1581.500" textLength="200">Transparency Level for Fill Styles:</text>
<rect class="e" x="1021.500" y="1564.500" width="57" height="22"/><path class="d" d="M1021.500 1587V1564.500H1079"/>
<text x="1024" y="1580" font-size="12" fill="#111">75</text>

<!-- Buttons -->
<g fill="#f0f0f0">
<rect x="416" y="1608" width="92" height="27"/><rect x="518" y="1608" width="92" height="27"/><rect x="722" y="1608" width="92" height="27"/><rect x="824" y="1608" width="100" height="27"/><rect x="934" y="1608" width="108" height="27"/><rect x="1052" y="1608" width="108" height="27"/>
</g>
<path fill="none" stroke="#fff" d="M416.500 1635V1608.500H508M518.500 1635V1608.500H610M722.500 1635V1608.500H814M824.500 1635V1608.500H924M934.500 1635V1608.500H1042M1052.500 1635V1608.500H1160"/>
<path fill="none" stroke="#777" stroke-width="1.500" d="M507.500 1608V1634.500H416M609.500 1608V1634.500H518M813.500 1608V1634.500H722M923.500 1608V1634.500H824M1041.500 1608V1634.500H934M1159.500 1608V1634.500H1052"/>
<rect x="620.500" y="1608.500" width="90.500" height="26" fill="#f0f0f0" stroke="#666" stroke-width="1.700"/>
<text class="c" x="462" y="1626">OK</text><text class="c" x="564" y="1626">Cancel</text><text class="c" x="665.500" y="1626">Apply</text><text class="c" x="768" y="1626">Help</text><text class="c" x="874" y="1626">Description</text><text class="c" x="988" y="1626">Set Defaults</text><text class="c" x="1106" y="1626">Reset Defaults</text>
</svg>
</body></html>
